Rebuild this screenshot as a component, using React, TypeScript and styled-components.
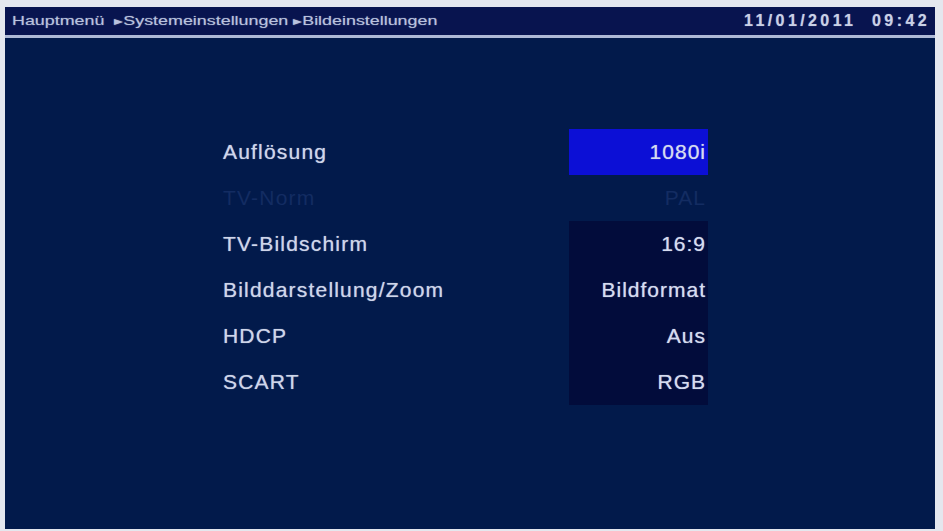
import React from "react";
import styled, { createGlobalStyle } from "styled-components";

const Global = createGlobalStyle`
  html, body { margin: 0; padding: 0; background: #e4e7ee; }
  body { font-family: "Liberation Sans", Arial, sans-serif; }
  #root { width: 943px; height: 531px; }
`;

const Screen = styled.div`
  box-sizing: border-box;
  margin: 7px 8px 0 5px;
  height: 522px;
  display: flex;
  flex-direction: column;
  background: #021a4b;
`;

const Header = styled.div`
  height: 28px;
  display: flex;
  align-items: center;
  justify-content: space-between;
  padding: 0 8px 0 7px;
  background: #08144f;
  border-bottom: 3px solid #aeb9d6;
`;

const Crumbs = styled.div`
  font-size: 12px;
  color: #b9c2de;
  white-space: nowrap;
  transform: scaleX(1.49);
  transform-origin: left center;
  text-shadow: 0 0 1px rgba(190, 200, 230, 0.6);
`;

const Clock = styled.div`
  font-size: 16px;
  font-weight: bold;
  color: #c9d0e6;
  letter-spacing: 3.4px;
  margin-right: -3px;
  text-shadow: 0 0 1px rgba(200, 210, 235, 0.6);
`;

const Main = styled.div`
  flex: 1;
  padding: 91px 0 0 218px;
`;

const List = styled.div`
  display: flex;
  flex-direction: column;
`;

const Row = styled.div`
  display: grid;
  grid-template-columns: 346px 139px;
  height: 46px;
  align-items: stretch;
`;

const Label = styled.div<{ $disabled?: boolean }>`
  display: flex;
  align-items: center;
  font-size: 21px;
  letter-spacing: 1.2px;
  color: ${(p) => (p.$disabled ? "#132c62" : "#cfd6ea")};
  text-shadow: ${(p) => (p.$disabled ? "none" : "0 0 1px rgba(200, 210, 235, 0.75)")};
`;

type Tone = "active" | "plain" | "boxed";

const Value = styled.div<{ $tone: Tone; $disabled?: boolean }>`
  display: flex;
  align-items: center;
  justify-content: flex-end;
  padding-right: 2px;
  font-size: 21px;
  letter-spacing: 1px;
  color: ${(p) => (p.$disabled ? "#132c62" : "#d6dcf0")};
  text-shadow: ${(p) => (p.$disabled ? "none" : "0 0 1px rgba(210, 220, 240, 0.75)")};
  background: ${(p) =>
    p.$tone === "active" ? "#0c0fd6" : p.$tone === "boxed" ? "#020c3b" : "transparent"};
`;

const rows: { label: string; value: string; tone: Tone; disabled?: boolean }[] = [
  { label: "Auflösung", value: "1080i", tone: "active" },
  { label: "TV-Norm", value: "PAL", tone: "plain", disabled: true },
  { label: "TV-Bildschirm", value: "16:9", tone: "boxed" },
  { label: "Bilddarstellung/Zoom", value: "Bildformat", tone: "boxed" },
  { label: "HDCP", value: "Aus", tone: "boxed" },
  { label: "SCART", value: "RGB", tone: "boxed" },
];

export default function App() {
  return (
    <>
      <Global />
      <Screen>
        <Header>
          <Crumbs>Hauptmenü &nbsp;▸Systemeinstellungen ▸Bildeinstellungen</Crumbs>
          <Clock>11/01/2011&nbsp; 09:42</Clock>
        </Header>
        <Main>
          <List>
            {rows.map((r) => (
              <Row key={r.label}>
                <Label $disabled={r.disabled}>{r.label}</Label>
                <Value $tone={r.tone} $disabled={r.disabled}>
                  {r.value}
                </Value>
              </Row>
            ))}
          </List>
        </Main>
      </Screen>
    </>
  );
}
